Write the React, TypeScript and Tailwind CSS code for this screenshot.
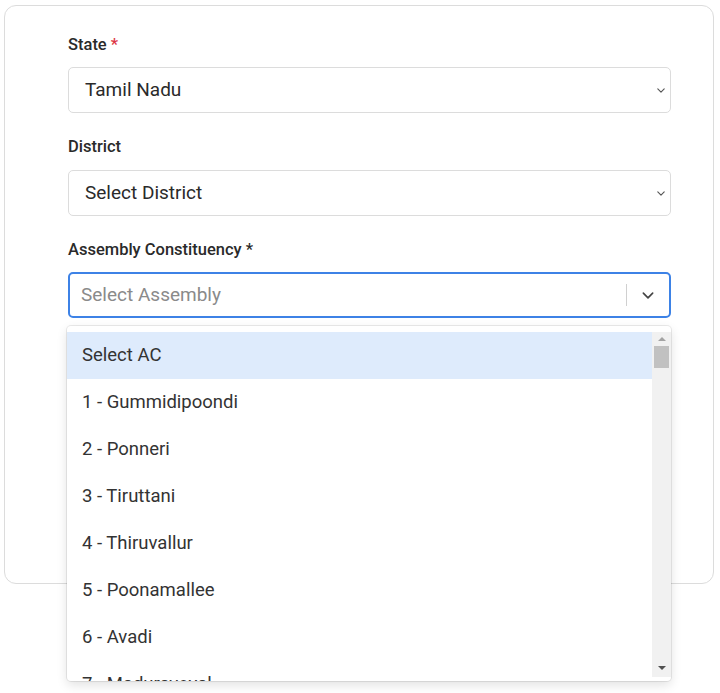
import React from "react";

const Chevron = ({ className }: { className?: string }) => (
  <svg viewBox="0 0 10 6" className={className} fill="none" stroke="currentColor" strokeWidth="1.4" strokeLinecap="round" strokeLinejoin="round">
    <path d="M1 1l4 4 4-4" />
  </svg>
);

const items = [
  "Select AC",
  "1 - Gummidipoondi",
  "2 - Ponneri",
  "3 - Tiruttani",
  "4 - Thiruvallur",
  "5 - Poonamallee",
  "6 - Avadi",
  "7 - Maduravoyal",
];

export default function App() {
  return (
    <div className="bg-white w-[720px] h-[693px] overflow-hidden pt-[5px] pl-[4px] relative" style={{ fontFamily: "Roboto, 'Liberation Sans', sans-serif" }}>
      <div className="w-[710px] h-[579px] border border-[#dcdcdc] rounded-[12px] pl-[63px] pr-[42px] pt-[29px]">
        <label className="block text-[16.5px] leading-[20px] font-medium text-[#2a2a2a] mb-[12px]">
          State <span className="text-[#dc3545]">*</span>
        </label>
        <div className="h-[46px] w-[603px] border border-[#dcdcdc] rounded-[5px] flex items-center justify-between pl-[16px] pr-[5px] text-[19px] text-[#2a2a2a]">
          <span>Tamil Nadu</span>
          <Chevron className="w-[8px] h-[5px] text-[#555]" />
        </div>
        <label className="block mt-[24px] text-[16.5px] leading-[20px] font-medium text-[#2a2a2a] mb-[13px]">District</label>
        <div className="h-[46px] w-[603px] border border-[#dcdcdc] rounded-[5px] flex items-center justify-between pl-[16px] pr-[5px] text-[19px] text-[#2a2a2a]">
          <span>Select District</span>
          <Chevron className="w-[8px] h-[5px] text-[#555]" />
        </div>
        <label className="block mt-[24px] text-[16.5px] leading-[20px] font-medium text-[#2a2a2a] mb-[12px]">
          Assembly Constituency *
        </label>
        <div className="relative w-[603px]">
          <div className="h-[46px] border-2 border-[#3d82e6] rounded-[5px] flex items-center pl-[11px] text-[19px]">
            <span className="flex-1 text-[#8a8a8a]">Select Assembly</span>
            <div className="w-px h-[22px] bg-[#d0d0d0]" />
            <div className="w-[42px] flex justify-center">
              <Chevron className="w-[12px] h-[7px] text-[#444]" />
            </div>
          </div>
          <div className="absolute left-[-1px] top-[54px] w-[604px] h-[355px] bg-white rounded-[4px] shadow-[0_0_0_1px_rgba(0,0,0,0.08),0_4px_11px_rgba(0,0,0,0.12)] pt-[6px] flex overflow-hidden">
            <div className="flex-1 overflow-hidden">
              {items.map((it, i) => (
                <div
                  key={it}
                  className={`h-[47px] shrink-0 flex items-center pl-[15px] text-[18.5px] text-[#333] ${i === 0 ? "bg-[#deebfc]" : ""}`}
                >
                  {it}
                </div>
              ))}
            </div>
            <div className="w-[19px] bg-[#f1f1f1] flex flex-col items-center mb-[4px]">
              <div className="h-[14px] flex items-center justify-center">
                <div className="w-0 h-0 border-l-[4px] border-r-[4px] border-b-[4px] border-l-transparent border-r-transparent border-b-[#a3a3a3]" />
              </div>
              <div className="w-[15px] h-[22px] bg-[#c1c1c1]" />
              <div className="flex-1" />
              <div className="h-[14px] flex items-center justify-center mb-[2px]">
                <div className="w-0 h-0 border-l-[4px] border-r-[4px] border-t-[4px] border-l-transparent border-r-transparent border-t-[#505050]" />
              </div>
            </div>
          </div>
        </div>
      </div>
    </div>
  );
}
